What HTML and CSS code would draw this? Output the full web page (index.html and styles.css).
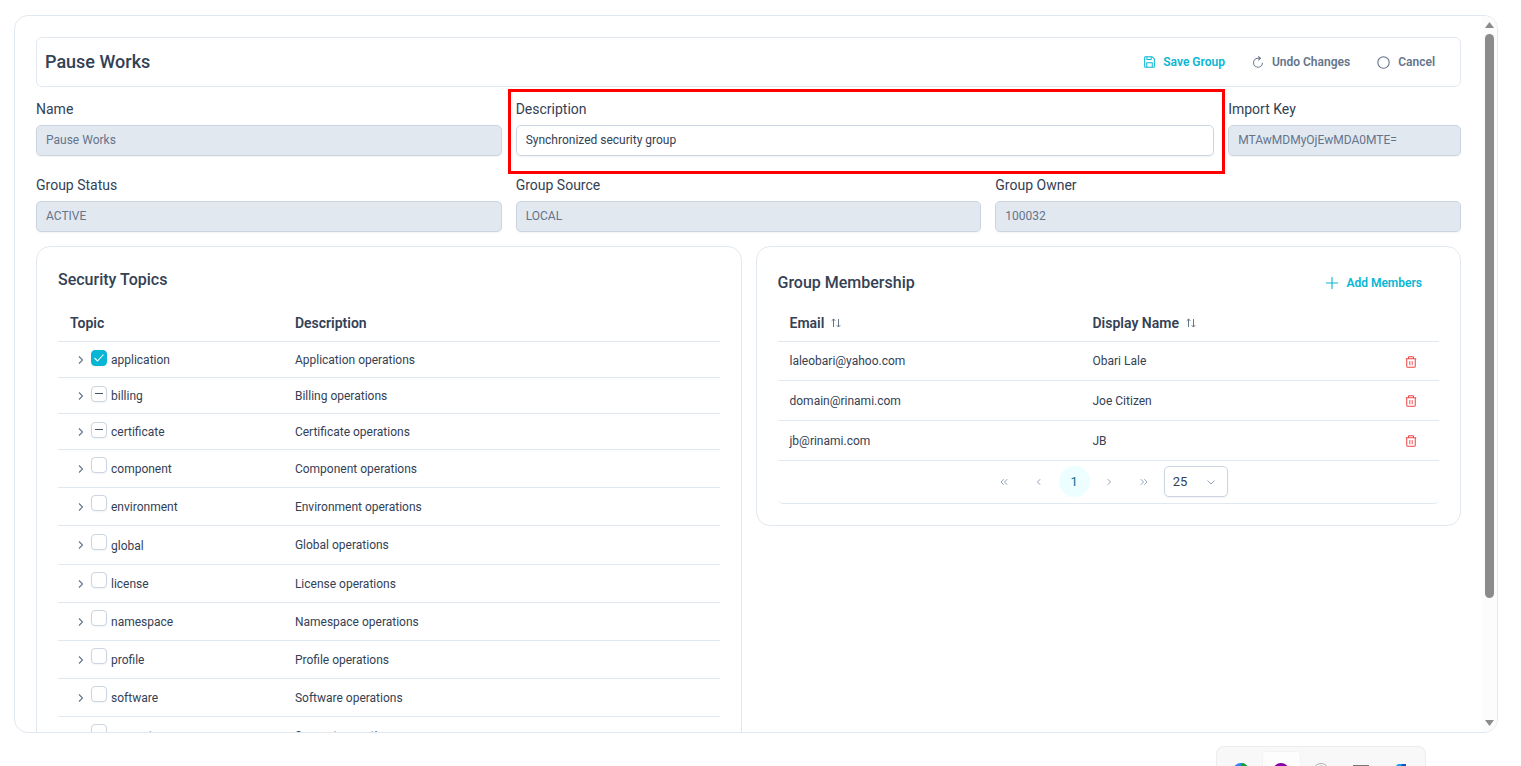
FILE: index.html
```html
<!DOCTYPE html>
<html lang="en">
<head>
<meta charset="utf-8">
<title>Pause Works</title>
<link rel="stylesheet" href="styles.css">
</head>
<body>
<svg class="sprite" aria-hidden="true">
  <symbol id="i-chevron" viewBox="0 0 10 10"><path d="M3 1.500L6.500 5 3 8.500" fill="none" stroke="currentColor" stroke-width="1.100"/></symbol>
  <symbol id="i-sort" viewBox="0 0 10 10"><path d="M2.500 9V1M.7 2.800l1.800-1.800 1.800 1.800M7.500 1V9M5.700 7.200l1.800 1.800 1.800-1.800" fill="none" stroke="currentColor" stroke-width="1"/></symbol>
  <symbol id="i-trash" viewBox="0 0 12 13"><path d="M.3 3h11.400M3.300 3V1.400Q3.300.7 4 .7h4q.7 0 .7.7V3M1.400 3v8.200q0 1.100 1.100 1.100h7q1.100 0 1.100-1.100V3" fill="none" stroke="currentColor" stroke-width="1.100"/><path d="M4.700 5.500v4.500M7.300 5.500v4.500" fill="none" stroke="currentColor" stroke-width="1"/></symbol>
</svg>
<main class="panel">
  <div class="content">
    <header class="bar">
      <h1>Pause Works</h1>
      <div class="actions">
        <button class="action primary"><svg width="11" height="12" viewBox="0 0 12 13"><path d="M1.600.7h7.200l2.500 2.500v7.900q0 1.200-1.200 1.200H1.900Q.7 12.300.7 11.100V1.600Q.7.7 1.600.7zM3 12V7.200h6V12M3.200 1v2.800h4.600V1" fill="none" stroke="currentColor" stroke-width="1.100"/></svg>Save Group</button>
        <button class="action"><svg width="12" height="12" viewBox="0 0 12 13"><path d="M6 2.500H8.500M6.300.4l2.400 2.100-2.400 2.200M6 2.500A4.800 4.800 0 1 0 10.800 7.300" fill="none" stroke="currentColor" stroke-width="1.100"/></svg>Undo Changes</button>
        <button class="action"><svg width="13" height="13" viewBox="0 0 13 13"><circle cx="6.500" cy="6.500" r="5.700" fill="none" stroke="currentColor" stroke-width="1.100"/></svg>Cancel</button>
      </div>
    </header>
    <section class="fields fields-main">
      <div class="field"><label for="name">Name</label><input id="name" value="Pause Works" disabled></div>
      <div class="field marked"><label for="desc">Description</label><input id="desc" value="Synchronized security group"></div>
      <div class="field"><label for="key">Import Key</label><input id="key" value="MTAwMDMyOjEwMDA0MTE=" disabled></div>
    </section>
    <section class="fields fields-meta">
      <div class="field"><label for="status">Group Status</label><input id="status" value="ACTIVE" disabled></div>
      <div class="field"><label for="source">Group Source</label><input id="source" value="LOCAL" disabled></div>
      <div class="field"><label for="owner">Group Owner</label><input id="owner" value="100032" disabled></div>
    </section>
    <div class="cards">
      <section class="card">
        <h2>Security Topics</h2>
        <table class="topics">
          <thead><tr><th class="c-topic">Topic</th><th>Description</th></tr></thead>
          <tbody>
            <tr><td><div class="node"><button class="toggle" aria-label="Expand application"><svg><use href="#i-chevron"/></svg></button><input type="checkbox" id="t1" checked><label for="t1">application</label></div></td><td>Application operations</td></tr>
            <tr><td><div class="node"><button class="toggle" aria-label="Expand billing"><svg><use href="#i-chevron"/></svg></button><input type="checkbox" id="t2" class="partial"><label for="t2">billing</label></div></td><td>Billing operations</td></tr>
            <tr><td><div class="node"><button class="toggle" aria-label="Expand certificate"><svg><use href="#i-chevron"/></svg></button><input type="checkbox" id="t3" class="partial"><label for="t3">certificate</label></div></td><td>Certificate operations</td></tr>
            <tr class="empty"><td><div class="node"><button class="toggle" aria-label="Expand component"><svg><use href="#i-chevron"/></svg></button><input type="checkbox" id="t4"><label for="t4">component</label></div></td><td>Component operations</td></tr>
            <tr class="empty"><td><div class="node"><button class="toggle" aria-label="Expand environment"><svg><use href="#i-chevron"/></svg></button><input type="checkbox" id="t5"><label for="t5">environment</label></div></td><td>Environment operations</td></tr>
            <tr class="empty"><td><div class="node"><button class="toggle" aria-label="Expand global"><svg><use href="#i-chevron"/></svg></button><input type="checkbox" id="t6"><label for="t6">global</label></div></td><td>Global operations</td></tr>
            <tr class="empty"><td><div class="node"><button class="toggle" aria-label="Expand license"><svg><use href="#i-chevron"/></svg></button><input type="checkbox" id="t7"><label for="t7">license</label></div></td><td>License operations</td></tr>
            <tr class="empty"><td><div class="node"><button class="toggle" aria-label="Expand namespace"><svg><use href="#i-chevron"/></svg></button><input type="checkbox" id="t8"><label for="t8">namespace</label></div></td><td>Namespace operations</td></tr>
            <tr class="empty"><td><div class="node"><button class="toggle" aria-label="Expand profile"><svg><use href="#i-chevron"/></svg></button><input type="checkbox" id="t9"><label for="t9">profile</label></div></td><td>Profile operations</td></tr>
            <tr class="empty"><td><div class="node"><button class="toggle" aria-label="Expand software"><svg><use href="#i-chevron"/></svg></button><input type="checkbox" id="t10"><label for="t10">software</label></div></td><td>Software operations</td></tr>
            <tr class="empty"><td><div class="node"><button class="toggle" aria-label="Expand support"><svg><use href="#i-chevron"/></svg></button><input type="checkbox" id="t11"><label for="t11">support</label></div></td><td>Support operations</td></tr>
          </tbody>
        </table>
      </section>
      <section class="card">
        <div class="card-head">
          <h2>Group Membership</h2>
          <button class="action primary add"><svg width="12" height="12" viewBox="0 0 12 12"><path d="M6 0v12M0 6h12" stroke="currentColor" stroke-width="1.100"/></svg>Add Members</button>
        </div>
        <table class="members">
          <thead><tr><th class="c-email">Email<svg class="sort"><use href="#i-sort"/></svg></th><th>Display Name<svg class="sort"><use href="#i-sort"/></svg></th><th class="c-del"></th></tr></thead>
          <tbody>
            <tr><td>laleobari@yahoo.com</td><td>Obari Lale</td><td class="c-del"><button class="trash" aria-label="Remove Obari Lale"><svg><use href="#i-trash"/></svg></button></td></tr>
            <tr><td>domain@rinami.com</td><td>Joe Citizen</td><td class="c-del"><button class="trash" aria-label="Remove Joe Citizen"><svg><use href="#i-trash"/></svg></button></td></tr>
            <tr><td>jb@rinami.com</td><td>JB</td><td class="c-del"><button class="trash" aria-label="Remove JB"><svg><use href="#i-trash"/></svg></button></td></tr>
          </tbody>
        </table>
        <nav class="pager" aria-label="Pages">
          <button class="page" aria-label="First page"><svg width="8" height="8" viewBox="0 0 8 8"><path d="M3.700 1.200L1 4l2.700 2.800M7.200 1.200L4.500 4l2.700 2.800"/></svg></button>
          <button class="page" aria-label="Previous page"><svg width="8" height="8" viewBox="0 0 8 8"><path d="M5.200 1.200L2.500 4l2.700 2.800"/></svg></button>
          <button class="page current">1</button>
          <button class="page" aria-label="Next page"><svg width="8" height="8" viewBox="0 0 8 8"><path d="M2.800 1.200L5.500 4 2.800 6.800"/></svg></button>
          <button class="page" aria-label="Last page"><svg width="8" height="8" viewBox="0 0 8 8"><path d="M.8 1.200L3.500 4 .8 6.800M4.300 1.200L7 4 4.300 6.800"/></svg></button>
          <select aria-label="Rows per page"><option>25</option></select>
        </nav>
      </section>
    </div>
  </div>
  <div class="scroll" aria-hidden="true">
    <svg width="9" height="6" viewBox="0 0 9 6"><path d="M4.500 0L9 6H0z" fill="#8b8b8b"/></svg>
    <div class="track"><div class="thumb"></div></div>
    <svg width="9" height="6" viewBox="0 0 9 6"><path d="M0 0h9L4.500 6z" fill="#8b8b8b"/></svg>
  </div>
</main>
<div class="dock" aria-hidden="true">
  <span class="slot"><svg width="16" height="16" viewBox="0 0 16 16"><circle cx="8" cy="8" r="8" fill="#2b88f0"/><path d="M8 0a8 8 0 0 1 8 8H8z" fill="#14a32a"/></svg></span>
  <span class="slot active"><svg width="16" height="16" viewBox="0 0 16 16"><circle cx="8" cy="8" r="8" fill="#8a00a8"/></svg></span>
  <span class="slot"><svg width="16" height="16" viewBox="0 0 16 16"><circle cx="8" cy="8" r="7.500" fill="#fff" stroke="#aaa"/><circle cx="8" cy="8" r="5.500" fill="#7d9be0"/></svg></span>
  <span class="slot"><svg width="16" height="16" viewBox="0 0 16 16"><path d="M0 2h16v14H0z" fill="#777"/></svg></span>
  <span class="slot"><svg width="14" height="16" viewBox="0 0 14 16"><path d="M4 1h5v15H1V4z" fill="#18a4ee"/><path d="M8 1h4v15H7V3z" fill="#1450c8"/></svg></span>
</div>
</body>
</html>
```
FILE: styles.css
```css
* { box-sizing: border-box; }
body {
  margin: 0;
  height: 100vh;
  overflow: hidden;
  display: flex;
  flex-direction: column;
  background: #fff;
  color: #334155;
  font: 12px/18px Roboto, "Liberation Sans", sans-serif;
}
.sprite { display: none; }
button, input, select { font: inherit; color: inherit; }
button { background: none; border: 0; padding: 0; cursor: pointer; }
h1, h2 { margin: 0; font-weight: 500; }
h1 { font-size: 18px; line-height: 24px; }
h2 { font-size: 16px; line-height: 24px; }

.panel {
  flex: 1;
  min-height: 0;
  display: flex;
  margin: 15px 23px 13px 14px;
  border: 1px solid #e2e8f0;
  border-radius: 14px;
  overflow: hidden;
}
.content { flex: 1; min-width: 0; padding: 21px; }

.bar {
  display: flex;
  align-items: center;
  justify-content: space-between;
  height: 50px;
  padding: 0 25px 0 8px;
  border: 1px solid #e2e8f0;
  border-radius: 6px;
}
.actions { display: flex; gap: 27px; }
.action {
  display: flex;
  align-items: center;
  gap: 8px;
  color: #64748b;
  font-weight: 600;
}
.primary { color: #06b6d4; }

.fields { display: grid; gap: 14px; margin-top: 12px; }
.fields-main { grid-template-columns: 2fr 3fr 1fr; }
.fields-meta { grid-template-columns: 1fr 1fr 1fr; margin-top: 19px; }
.field { position: relative; display: flex; flex-direction: column; gap: 6px; min-width: 0; }
.field label { font-size: 14px; line-height: 20px; }
.field input {
  width: 100%;
  height: 31px;
  padding: 0 9px 2px;
  border: 1px solid #cbd5e1;
  border-radius: 5px;
  background: #fff;
  box-shadow: 0 1px 2px rgba(18, 18, 23, .05);
}
.field input:disabled { background: #e2e8f0; color: #64748b; }
.marked::after {
  content: "";
  position: absolute;
  inset: -10px -11px -18px -8px;
  border: 3px solid #f00;
  pointer-events: none;
}

.cards {
  display: grid;
  grid-template-columns: 1fr 1fr;
  gap: 14px;
  align-items: start;
  margin-top: 14px;
}
.card { padding: 21px; border: 1px solid #e2e8f0; border-radius: 14px; }
.card-head { display: flex; align-items: center; justify-content: space-between; height: 30px; }
.add { margin-right: 17px; }

table { width: 100%; border-collapse: separate; border-spacing: 0; table-layout: fixed; }
th, td { padding: 0 12px; border-bottom: 1px solid #e2e8f0; text-align: left; }
th { height: 38px; font-size: 14px; font-weight: 600; }
.topics { margin-top: 12px; }
.c-topic { width: 34%; }
.topics td { height: 36px; }
.topics .empty td { height: 38px; }
.topics .empty:nth-child(6) td { height: 39px; }
.node { display: flex; align-items: center; }
.toggle { display: flex; justify-content: center; width: 21px; }
.toggle svg { width: 10px; height: 10px; color: #64748b; }
.node input {
  appearance: none;
  width: 16px;
  height: 16px;
  margin: 0 4px 3px 0;
  border: 1px solid #cbd5e1;
  border-radius: 4px;
  background: #fff center / 12px 12px no-repeat;
  box-shadow: 0 1px 2px rgba(18, 18, 23, .05);
}
.empty .node input { margin-bottom: 7px; }
.empty .node label { padding-top: 1px; }
.node input:checked {
  border-color: #06b6d4;
  background-color: #06b6d4;
  background-image: url("data:image/svg+xml,%3Csvg xmlns='http://www.w3.org/2000/svg' viewBox='0 0 12 12'%3E%3Cpath d='M1.500 6l3 3L10.500 2.500' fill='none' stroke='white' stroke-width='1.100'/%3E%3C/svg%3E");
}
.node .partial {
  background-image: url("data:image/svg+xml,%3Csvg xmlns='http://www.w3.org/2000/svg' viewBox='0 0 12 12'%3E%3Cpath d='M2 5.500h8' stroke='%23475569'/%3E%3C/svg%3E");
}

.members { margin-top: 6px; }
.members td { height: 40px; }
.members tr:first-child td { height: 39px; }
.c-email { width: 303px; }
.sort { width: 10px; height: 10px; margin-left: 7px; color: #64748b; }
.members .c-del { width: 60px; padding-right: 22px; text-align: right; }
.trash { display: inline-flex; vertical-align: middle; color: #ef4444; }
.trash svg { width: 12px; height: 12px; }

.pager {
  display: flex;
  align-items: center;
  justify-content: center;
  gap: 4px;
  height: 43px;
  padding-bottom: 1px;
  border-bottom: 1px solid #e2e8f0;
  border-radius: 0 0 5px 5px;
}
.page {
  display: flex;
  align-items: center;
  justify-content: center;
  width: 31px;
  height: 31px;
  border-radius: 50%;
  color: #94a3b8;
}
.page path { fill: none; stroke: currentColor; }
.pager .current, .pager select { font-size: 13px; }
.current { background: #ecfeff; color: #0e7490; }
.pager select {
  appearance: none;
  width: 64px;
  height: 31px;
  padding: 0 8px;
  border: 1px solid #cbd5e1;
  border-radius: 5px;
  background: #fff right 11px center / 10px 10px no-repeat url("data:image/svg+xml,%3Csvg xmlns='http://www.w3.org/2000/svg' viewBox='0 0 10 10'%3E%3Cpath d='M1.500 3.500L5 7l3.500-3.500' fill='none' stroke='%2394a3b8'/%3E%3C/svg%3E");
  box-shadow: 0 1px 2px rgba(18, 18, 23, .05);
}

.scroll {
  display: flex;
  flex-direction: column;
  align-items: center;
  gap: 6px;
  width: 15px;
  padding: 6px 0;
  background: #fcfcfc;
}
.track { flex: 1; }
.thumb { width: 9px; height: 83%; border-radius: 5px; background: #8b8b8b; }

.dock {
  align-self: flex-end;
  display: flex;
  justify-content: space-around;
  width: 210px;
  height: 20px;
  margin-right: 95px;
  padding: 4px 4px 0;
  border: 1px solid #ededed;
  border-bottom: 0;
  border-radius: 8px 8px 0 0;
  background: #f8f8f8;
  overflow: hidden;
}
.slot { width: 39px; height: 40px; padding-top: 12px; display: flex; justify-content: center; }
.active { background: #fdfdfd; border: 1px solid #f3f3f3; border-radius: 4px; padding-top: 11px; }
```
